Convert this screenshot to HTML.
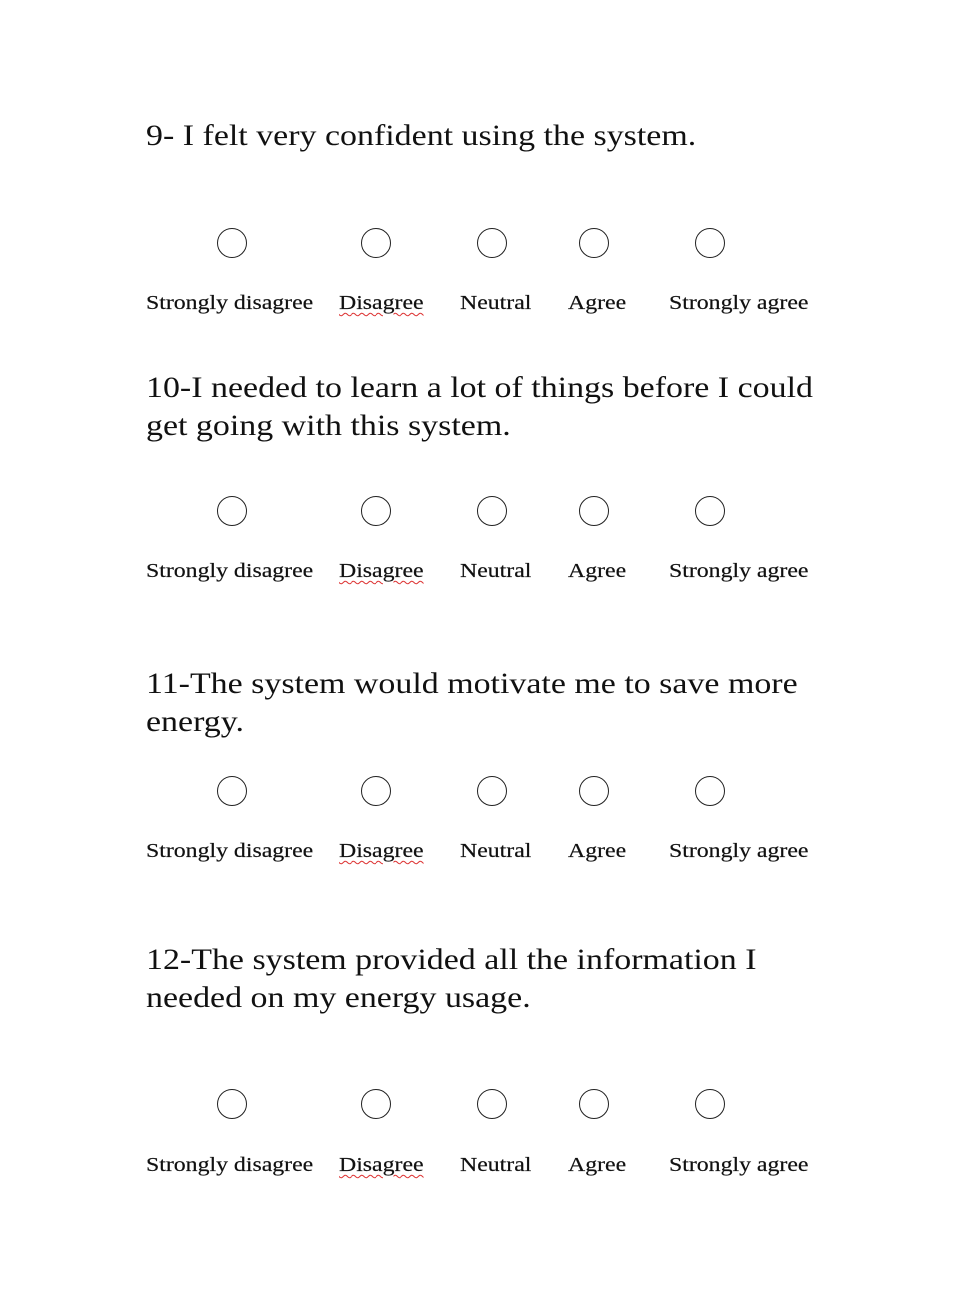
<!DOCTYPE html>
<html><head><meta charset="utf-8"><style>
body{margin:0;background:#fff;width:954px;height:1312px;position:relative;overflow:hidden;font-family:"Liberation Serif",serif;color:#111}
.h{position:absolute;left:146px;font-size:29.5px;line-height:38px;white-space:nowrap;transform:scaleX(1.15);transform-origin:0 0}
.c{position:absolute;width:30px;height:30px;border:1.7px solid #222;border-radius:50%;box-sizing:border-box}
.l{position:absolute;font-size:20px;white-space:nowrap;line-height:20px;transform:scaleX(1.19);transform-origin:0 0;-webkit-text-stroke:0.2px #111}
.u{text-decoration:underline wavy #d33;text-decoration-thickness:1px;text-underline-offset:3px}
</style></head><body>
<div class="h" style="top:117px">9- I felt very confident using the system.</div>
<div class="h" style="top:369px">10-I needed to learn a lot of things before I could<br>get going with this system.</div>
<div class="h" style="top:665px">11-The system would motivate me to save more<br>energy.</div>
<div class="h" style="top:941px">12-The system provided all the information I<br>needed on my energy usage.</div>
<script>
var rows=[[243,302],[511,570],[791,850],[1104,1164]];
var cx=[232,376,492,594,710];
var labels=[["Strongly disagree",146],["Disagree",339],["Neutral",460],["Agree",568],["Strongly agree",669]];
var h="";
rows.forEach(function(r){
 cx.forEach(function(x){h+='<div class="c" style="left:'+(x-15)+'px;top:'+(r[0]-15)+'px"></div>';});
 labels.forEach(function(l,i){h+='<div class="l'+(i==1?' u':'')+'" style="left:'+l[1]+'px;top:'+(r[1]-9)+'px">'+l[0]+'</div>';});
});
document.body.insertAdjacentHTML('beforeend',h);
</script>
</body></html>
